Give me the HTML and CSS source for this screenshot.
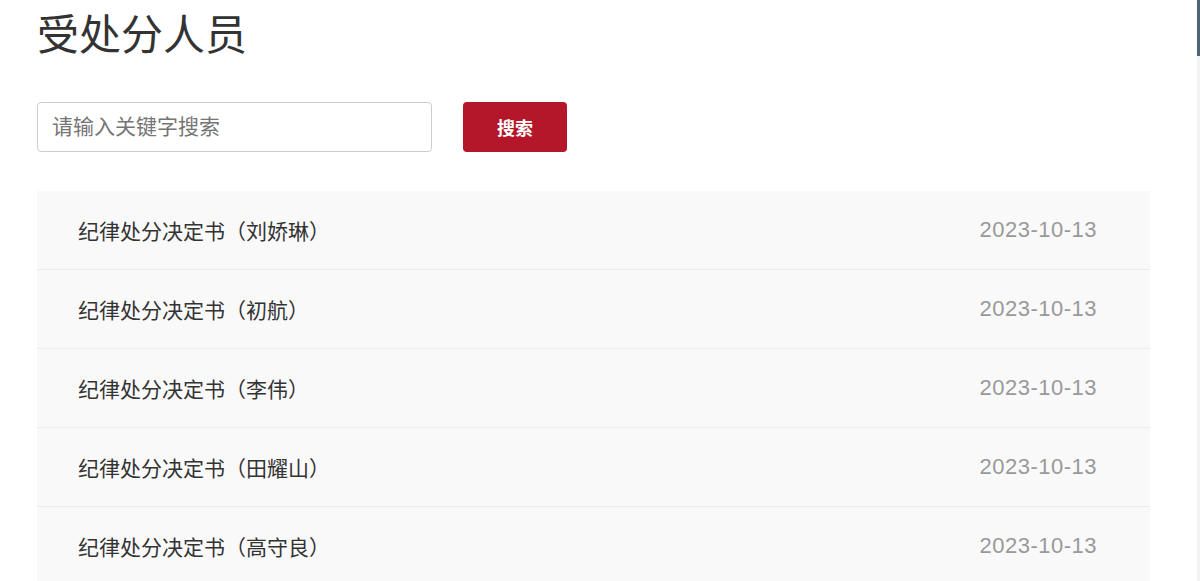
FILE: index.html
```html
<!DOCTYPE html>
<html lang="zh-CN">
<head>
    <meta charset="UTF-8">
    <meta name="viewport" content="width=device-width, initial-scale=1.0">
    <title>受处分人员</title>
    <link rel="stylesheet" href="styles.css">
</head>
<body>
    <div class="page">
        <div class="main">
            <h1 class="title">受处分人员</h1>
            <div class="search">
                <input type="text" class="search-input" placeholder="请输入关键字搜索">
                <button class="search-btn">搜索</button>
            </div>
            <ul class="list">
                <li class="item"><span class="item-name">纪律处分决定书（刘娇琳）</span><span class="item-date">2023-10-13</span></li>
                <li class="item"><span class="item-name">纪律处分决定书（初航）</span><span class="item-date">2023-10-13</span></li>
                <li class="item"><span class="item-name">纪律处分决定书（李伟）</span><span class="item-date">2023-10-13</span></li>
                <li class="item"><span class="item-name">纪律处分决定书（田耀山）</span><span class="item-date">2023-10-13</span></li>
                <li class="item"><span class="item-name">纪律处分决定书（高守良）</span><span class="item-date">2023-10-13</span></li>
            </ul>
        </div>
        <div class="side-bar"><div class="side-thumb"></div></div>
    </div>
</body>
</html>
```

FILE: styles.css
```css
html, body {
    margin: 0;
    height: 100%;
    overflow: hidden;
}
body {
    font-family: "Liberation Sans", "Noto Sans CJK SC", sans-serif;
    background: #fff;
    color: #333;
}
.page {
    display: flex;
    height: 100%;
}
.main {
    flex: 1;
    padding: 0 47px 0 37px;
}
.title {
    margin: 0;
    padding-top: 9px;
    font-size: 42px;
    font-weight: normal;
    line-height: 54px;
    color: #333;
}
.search {
    display: flex;
    gap: 31px;
    margin-top: 39px;
}
.search-input {
    width: 395px;
    height: 50px;
    box-sizing: border-box;
    padding: 0 14px;
    border: 1px solid #ccc;
    border-radius: 4px;
    font-family: inherit;
    font-size: 21px;
    color: #333;
}
.search-input::placeholder {
    color: #757575;
}
.search-btn {
    width: 104px;
    height: 50px;
    border: none;
    border-radius: 4px;
    background: #b4162a;
    color: #fff;
    font-family: inherit;
    font-size: 18px;
    font-weight: bold;
}
.list {
    list-style: none;
    margin: 39px 0 0;
    padding: 0;
}
.item {
    display: flex;
    justify-content: space-between;
    align-items: center;
    height: 79px;
    box-sizing: border-box;
    padding: 0 53px 0 41px;
    background: #f9f9f9;
    border-bottom: 1px solid #ececec;
    font-size: 21px;
}
.item-name {
    color: #333;
}
.item-date {
    color: #999;
    font-size: 22px;
    letter-spacing: 0.5px;
}
.side-bar {
    width: 3px;
    background: #f2f2f2;
}
.side-thumb {
    height: 56px;
    background: #4d6476;
}
```
